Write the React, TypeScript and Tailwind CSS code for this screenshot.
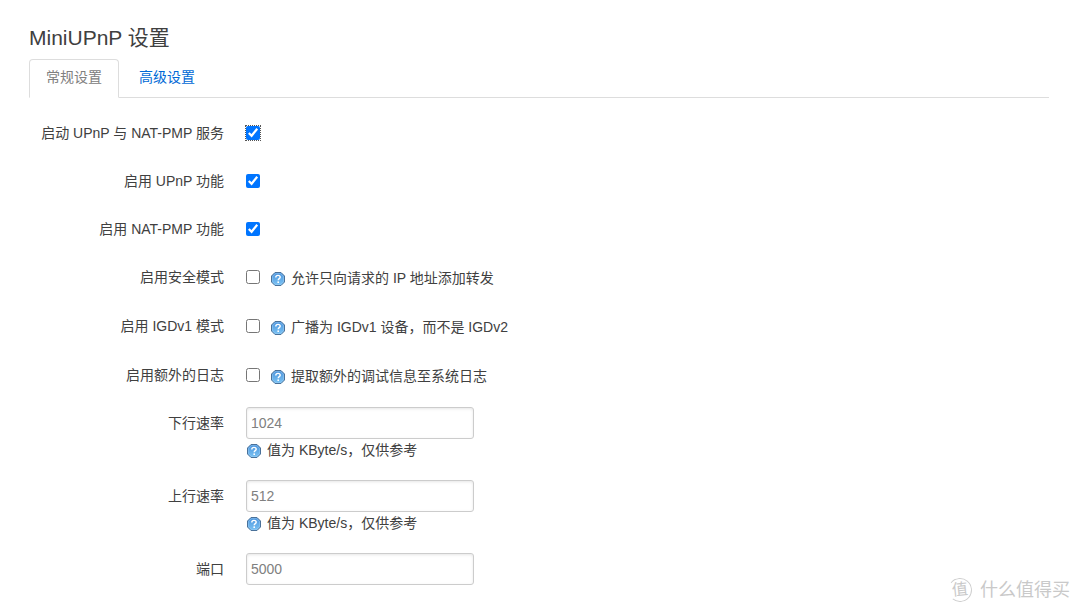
import React, { useState } from 'react';

interface Flag {
  id: string;
  label: string;
  checked: boolean;
  hint?: string;
}

interface Field {
  id: string;
  label: string;
  value: string;
  hint?: string;
}

const initialFlags: Flag[] = [
  { id: 'enabled', label: '启动 UPnP 与 NAT-PMP 服务', checked: true },
  { id: 'upnp', label: '启用 UPnP 功能', checked: true },
  { id: 'natpmp', label: '启用 NAT-PMP 功能', checked: true },
  { id: 'secure', label: '启用安全模式', checked: false, hint: '允许只向请求的 IP 地址添加转发' },
  { id: 'igdv1', label: '启用 IGDv1 模式', checked: false, hint: '广播为 IGDv1 设备，而不是 IGDv2' },
  { id: 'log', label: '启用额外的日志', checked: false, hint: '提取额外的调试信息至系统日志' },
];

const initialFields: Field[] = [
  { id: 'download', label: '下行速率', value: '1024', hint: '值为 KByte/s，仅供参考' },
  { id: 'upload', label: '上行速率', value: '512', hint: '值为 KByte/s，仅供参考' },
  { id: 'port', label: '端口', value: '5000' },
];

const HelpIcon: React.FC = () => (
  <svg width="16" height="16" viewBox="0 0 16 16" className="shrink-0" aria-hidden="true">
    <defs>
      <linearGradient id="help-fill" x1="0" y1="0" x2="0" y2="1">
        <stop offset="0" stopColor="#4b93dc" />
        <stop offset="1" stopColor="#7cc4f4" />
      </linearGradient>
    </defs>
    <path d="M5 1.5h6L14.5 5v6L11 14.5H5L1.5 11V5z" fill="url(#help-fill)" stroke="#4a7199" strokeLinejoin="round" />
    <path d="M5.4 2.5h5.2l2.9 2.9v5.2l-2.9 2.9H5.4l-2.9-2.9V5.4z" fill="none" stroke="#a5d3f7" strokeOpacity="0.4" />
    <path d="M5.8 6.4c0-1.3.9-2 2.2-2s2.2.8 2.2 1.8c0 1.4-2 1.4-2 3" fill="none" stroke="#fff" strokeWidth="1.4" />
    <rect x="7.4" y="10.4" width="1.6" height="1.6" fill="#fff" />
  </svg>
);

const Hint: React.FC<{ text: string }> = ({ text }) => (
  <div className="flex items-center gap-[5px] leading-[23px]">
    <HelpIcon />
    <span>{text}</span>
  </div>
);

const Watermark: React.FC = () => (
  <div className="absolute right-2.5 bottom-2 flex items-center gap-2 text-[#c9c9c9]">
    <span className="flex h-6 w-6 -rotate-6 items-center justify-center rounded-full border border-[#cfcfcf] border-l-transparent text-base leading-6">
      值
    </span>
    <span className="text-lg leading-7">什么值得买</span>
  </div>
);

const App: React.FC = () => {
  const [flags, setFlags] = useState(initialFlags);
  const [fields, setFields] = useState(initialFields);
  const [tab, setTab] = useState('general');

  const toggle = (id: string) => {
    setFlags(flags.map((f) => (f.id === id ? { ...f, checked: !f.checked } : f)));
  };

  const update = (id: string, value: string) => {
    setFields(fields.map((f) => (f.id === id ? { ...f, value } : f)));
  };

  const tabClass = (name: string) =>
    tab === name
      ? '-mb-px rounded-t border border-[#ddd] border-b-white bg-white px-4 pb-1 text-[#808080]'
      : '-mb-px border border-transparent px-4 pb-1 text-[#0069d6]';

  return (
    <div className="relative min-h-screen bg-white pt-4 pr-[31px] pl-[29px] font-['Liberation_Sans','Noto_Sans_CJK_SC',sans-serif] text-sm text-[#404040]">
      <h2 className="pt-px text-[21px] leading-[42px]">MiniUPnP 设置</h2>
      <div role="tablist" className="flex h-[39px] gap-[3px] border-b border-[#ddd]">
        <button role="tab" aria-selected={tab === 'general'} onClick={() => setTab('general')} className={tabClass('general')}>
          常规设置
        </button>
        <button role="tab" aria-selected={tab === 'advanced'} onClick={() => setTab('advanced')} className={tabClass('advanced')}>
          高级设置
        </button>
      </div>

      <form className="pt-6">
        {flags.map((flag) => (
          <div key={flag.id} className={flag.hint ? 'flex h-[49px] items-start' : 'flex h-12 items-start'}>
            <label htmlFor={flag.id} className="w-[195px] shrink-0 pt-px text-right leading-5">
              {flag.label}
            </label>
            <div className="ml-[22px] flex items-start gap-2.5 pt-px">
              <input
                id={flag.id}
                type="checkbox"
                checked={flag.checked}
                onChange={() => toggle(flag.id)}
                className={
                  flag.id === 'enabled'
                    ? 'mt-[3px] h-3.5 w-3.5 accent-[#0075ff] outline-1 outline-dotted outline-[#555]'
                    : 'mt-[3px] h-3.5 w-3.5 accent-[#0075ff]'
                }
              />
              {flag.hint && <Hint text={flag.hint} />}
            </div>
          </div>
        ))}
        {fields.map((field) => (
          <div key={field.id} className="flex items-start pb-[18px] last:pb-0">
            <label htmlFor={field.id} className="w-[195px] shrink-0 text-right leading-5">
              {field.label}
            </label>
            <div className="-mt-1.5 ml-[22px]">
              <input
                id={field.id}
                type="text"
                value={field.value}
                onChange={(e) => update(field.id, e.target.value)}
                className="block h-8 w-57 rounded-[3px] border border-[#ccc] px-1 text-[#808080] shadow-[inset_0_1px_3px_rgba(0,0,0,0.1)] outline-none"
              />
              {field.hint && (
                <div className="pb-1.5">
                  <Hint text={field.hint} />
                </div>
              )}
            </div>
          </div>
        ))}
      </form>
      <Watermark />
    </div>
  );
};

export default App;
